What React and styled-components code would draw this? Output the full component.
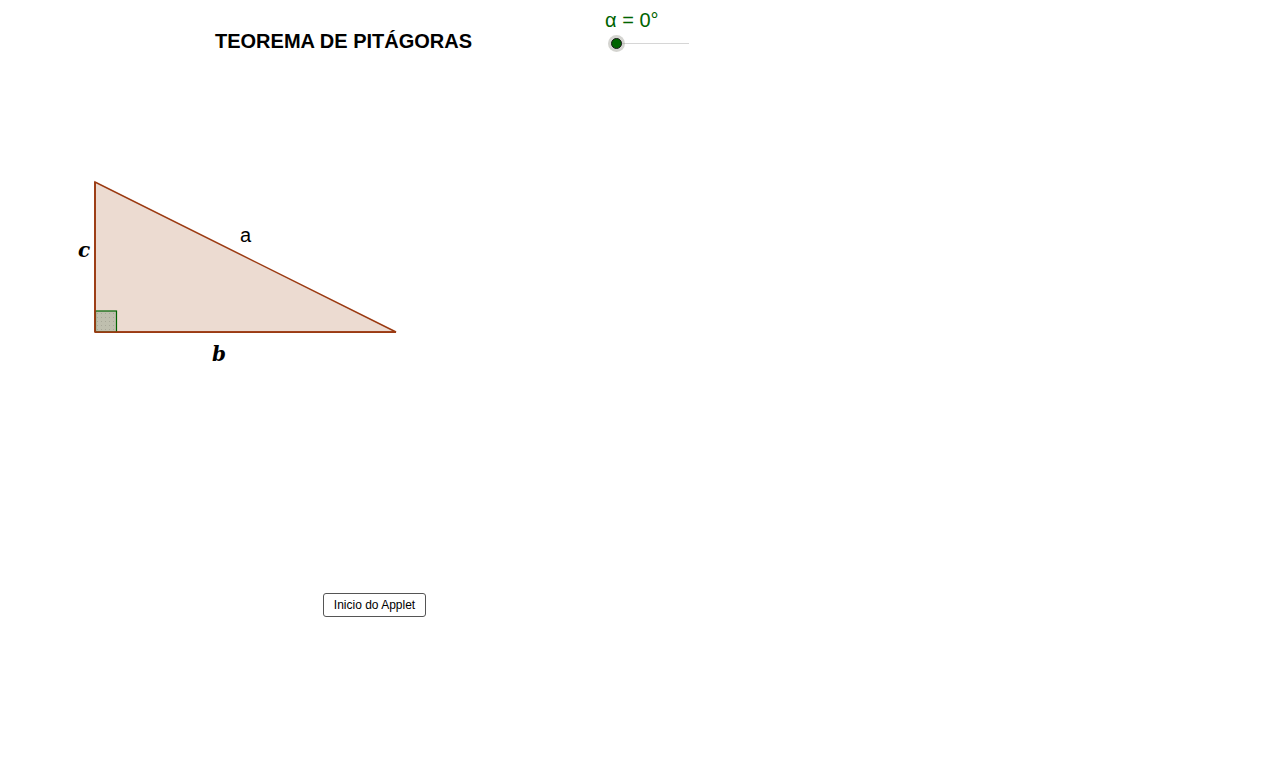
import React from "react";
import styled, { createGlobalStyle } from "styled-components";

const GlobalStyle = createGlobalStyle`
  html, body {
    margin: 0;
    padding: 0;
    background: #ffffff;
  }
  body {
    font-family: "Liberation Sans", Arial, sans-serif;
  }
`;

const Stage = styled.div`
  width: 1288px;
  height: 772px;
  background: #ffffff;
  overflow: hidden;
  display: flex;
  flex-direction: column;
`;

const Header = styled.div`
  display: flex;
  align-items: flex-start;
  gap: 133px;
  height: 60px;
  padding: 8px 0 0 215px;
  box-sizing: border-box;
`;

const Title = styled.div`
  margin-top: 21px;
  font-size: 20px;
  font-weight: bold;
  color: #000000;
  white-space: nowrap;
  line-height: 24px;
`;

const SliderBox = styled.div`
  display: flex;
  flex-direction: column;
  width: 90px;
`;

const SliderLabel = styled.div`
  font-size: 20px;
  color: #006400;
  line-height: 24px;
  white-space: nowrap;
`;

const Track = styled.div`
  position: relative;
  margin: 11px 0 0 11px;
  width: 73px;
  height: 1px;
  background: #d6d6d6;
`;

// knob sits over the track
const Knob = styled.div`
  position: absolute;
  left: -8px;
  top: -8px;
  width: 17px;
  height: 17px;
  border-radius: 50%;
  background: rgba(160, 160, 150, 0.45);
  display: flex;
  align-items: center;
  justify-content: center;

  &::after {
    content: "";
    width: 9px;
    height: 9px;
    border-radius: 50%;
    background: #006400;
    border: 1px solid #1a1a1a;
  }
`;

const Figure = styled.svg`
  display: block;
  flex: none;
`;

const SideLabel = styled.text`
  font-family: ${({ serif }) =>
    serif ? `"DejaVu Serif", "Liberation Serif", serif` : `"Liberation Sans", Arial, sans-serif`};
  font-style: ${({ serif }) => (serif ? "italic" : "normal")};
  font-weight: ${({ serif }) => (serif ? "bold" : "normal")};
  font-size: 20px;
  fill: #000000;
`;

const Footer = styled.div`
  display: flex;
  padding: 213px 0 0 323px;
`;

const AppletButton = styled.button`
  width: 103px;
  height: 24px;
  padding: 0;
  background: #ffffff;
  border: 1px solid #555555;
  border-radius: 3px;
  font-family: "Liberation Sans", Arial, sans-serif;
  font-size: 12px;
  color: #000000;
  cursor: pointer;
`;

const App = () => {
  return (
    <>
      <GlobalStyle />
      <Stage>
        <Header>
          <Title>TEOREMA DE PITÁGORAS</Title>
          <SliderBox>
            <SliderLabel>α = 0°</SliderLabel>
            <Track>
              <Knob />
            </Track>
          </SliderBox>
        </Header>

        <Figure width="1288" height="320" viewBox="0 60 1288 320">
          <defs>
            <pattern id="dots" width="4" height="4" patternUnits="userSpaceOnUse">
              <rect width="4" height="4" fill="#bfbfae" />
              <rect x="1" y="1" width="1" height="1" fill="#a8a898" />
            </pattern>
          </defs>
          <polygon
            points="95,182 95,332 396,332"
            fill="#ecdbd1"
            stroke="#9b3a12"
            strokeWidth="1.5"
          />
          <rect x="95.5" y="311" width="21" height="21" fill="url(#dots)" stroke="#006400" strokeWidth="1.2" />
          <line x1="95" y1="332.2" x2="396" y2="332.2" stroke="#9b3a12" strokeWidth="1.8" />
          <line x1="95" y1="182" x2="95" y2="332" stroke="#9b3a12" strokeWidth="1.8" />
          <SideLabel serif x="78" y="257">c</SideLabel>
          <SideLabel x="240" y="242">a</SideLabel>
          <SideLabel serif x="212" y="361">b</SideLabel>
        </Figure>

        <Footer>
          <AppletButton>Inicio do Applet</AppletButton>
        </Footer>
      </Stage>
    </>
  );
};

export default App;
